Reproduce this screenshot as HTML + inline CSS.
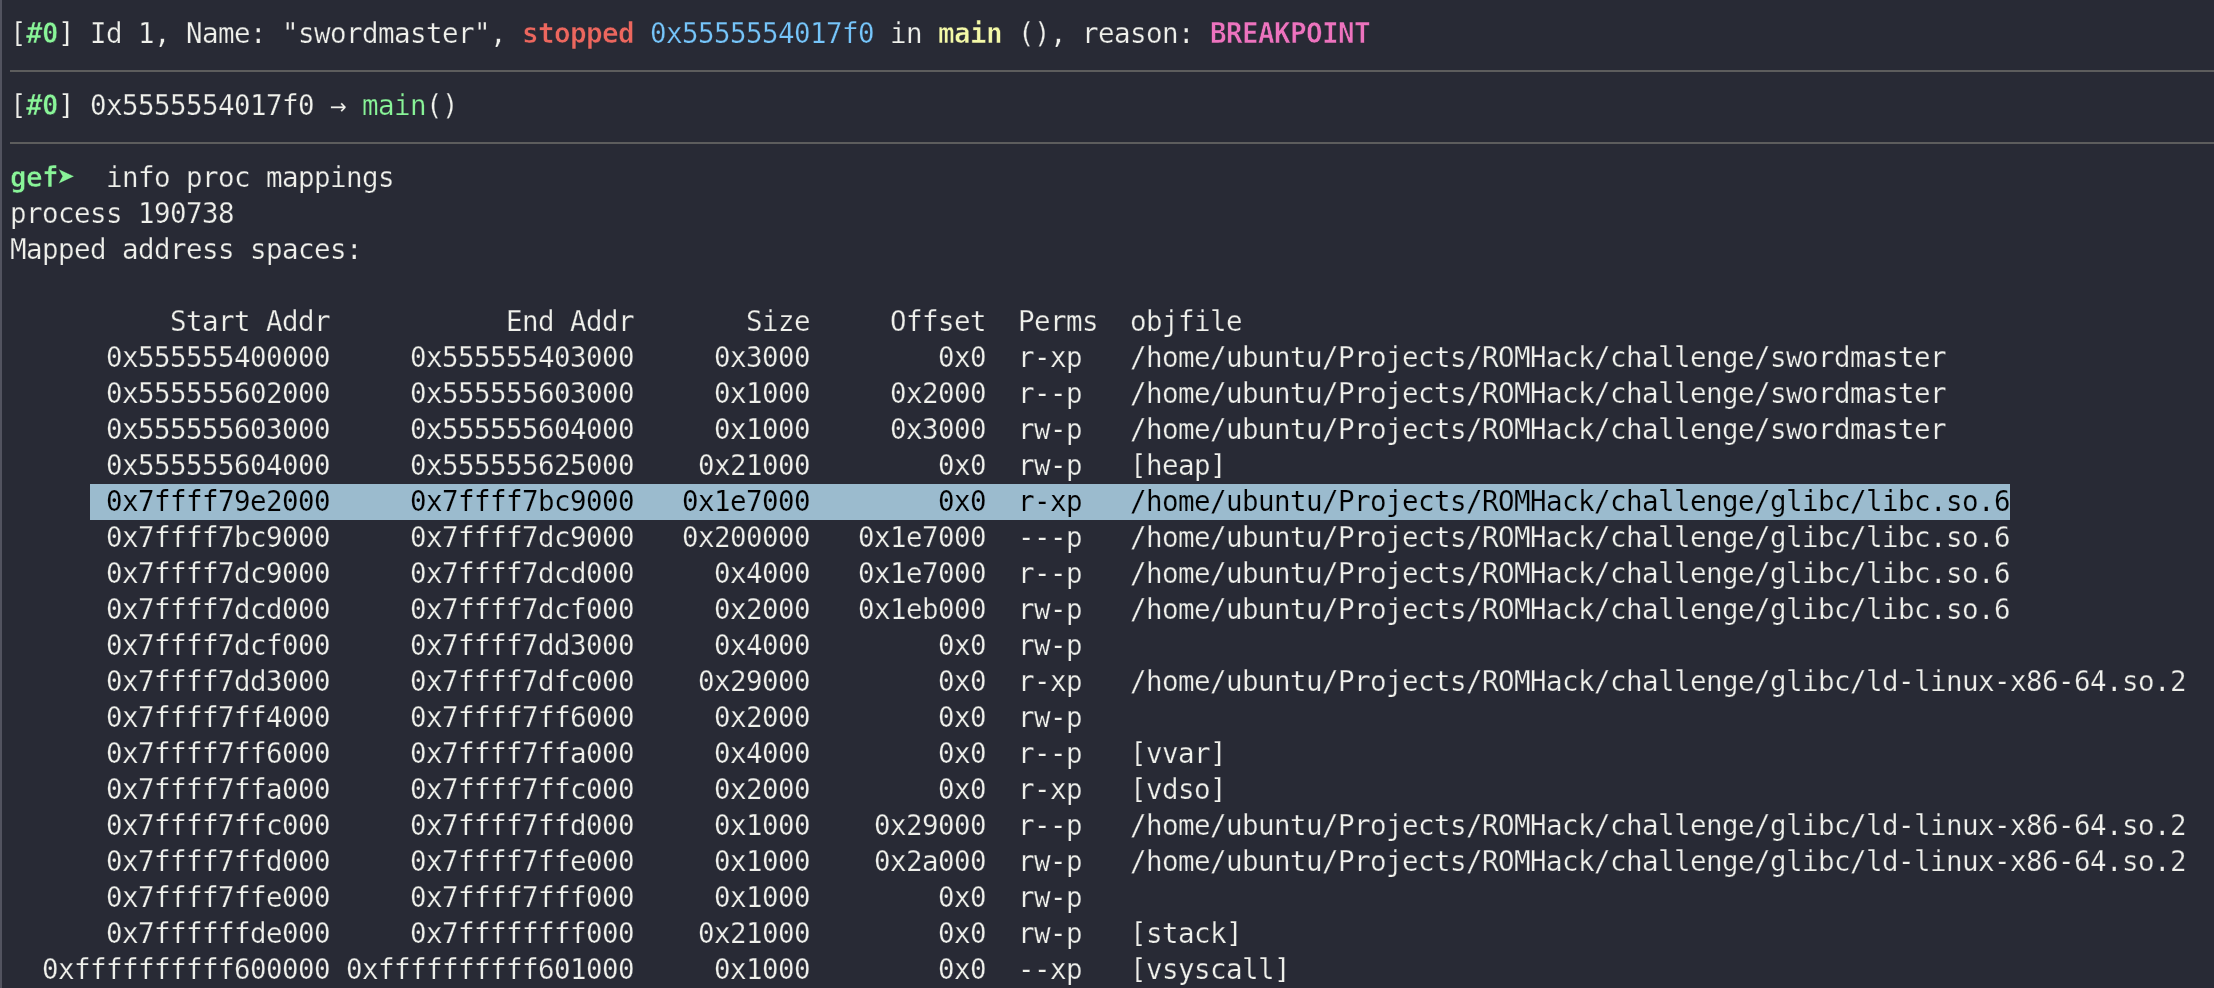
<!DOCTYPE html>
<html><head><meta charset="utf-8"><title>gef - info proc mappings</title>
<style>
html,body{margin:0;padding:0;background:#282a35;}
body{width:2214px;height:988px;overflow:hidden;position:relative;}
#edge{position:absolute;left:0;top:0;width:2px;height:988px;background:#52535f;}
.hr{position:absolute;left:10px;right:0;height:2px;background:#5d5d5d;}
#hl{position:absolute;left:90px;top:484px;width:1920px;height:36px;background:#9bbbce;}
#t{position:absolute;left:10px;top:15px;margin:0;font-family:"DejaVu Sans Mono","Liberation Mono",monospace;font-size:27.5px;letter-spacing:-0.5564px;line-height:36px;color:#eff0eb;white-space:pre;will-change:transform;-webkit-text-stroke:0.25px #282a35;font-kerning:none;font-variant-ligatures:none;}
#t div{height:36px;}
b{font-weight:bold;}
.g{color:#89f498;} .r{color:#ec675e;} .bl{color:#76c5fa;} .y{color:#f4f9a8;} .p{color:#ed73be;}
.sel{color:#000;-webkit-text-stroke:0.15px #9bbbce;}
b{-webkit-text-stroke-width:0.5px;}
.ar{display:inline-block;transform:scale(1.16);transform-origin:50% 60%;}
.s{display:inline-block;white-space:pre;}
.c{letter-spacing:0;text-align:center;-webkit-text-stroke-width:0.15px;}
</style></head>
<body>
<div id="edge"></div>
<div class="hr" style="top:70px"></div>
<div class="hr" style="top:142px"></div>
<div id="hl"></div>
<div id="t"><div><span class="s" style="width:16px">[</span><b class="s g" style="width:32px">#0</b><span class="s" style="width:464px">] Id 1, Name: "swordmaster", </span><b class="s r" style="width:112px">stopped</b><span class="s" style="width:16px"> </span><span class="s bl" style="width:224px">0x5555554017f0</span><span class="s" style="width:64px"> in </span><b class="s y" style="width:64px">main</b><span class="s" style="width:208px"> (), reason: </span><b class="s p" style="width:160px">BREAKPOINT</b></div><div></div><div><span class="s" style="width:16px">[</span><b class="s g" style="width:32px">#0</b><span class="s" style="width:272px">] 0x5555554017f0 </span><span class="s c" style="width:16px">→</span><span class="s" style="width:16px"> </span><span class="s g" style="width:64px">main</span><span class="s" style="width:32px">()</span></div><div></div><div><b class="s g" style="width:48px">gef</b><b class="s g c" style="width:16px"><span class="ar">➤</span></b><span class="s" style="width:320px">  info proc mappings</span></div><div><span class="s" style="width:224px">process 190738</span></div><div><span class="s" style="width:352px">Mapped address spaces:</span></div><div></div><div><span class="s" style="width:336px">          Start Addr </span><span class="s" style="width:304px">          End Addr </span><span class="s" style="width:176px">      Size </span><span class="s" style="width:176px">    Offset </span><span class="s" style="width:128px"> Perms  </span><span class="s" style="width:112px">objfile</span></div><div><span class="s" style="width:336px">      0x555555400000 </span><span class="s" style="width:304px">    0x555555403000 </span><span class="s" style="width:176px">    0x3000 </span><span class="s" style="width:176px">       0x0 </span><span class="s" style="width:128px"> r-xp   </span><span class="s" style="width:816px">/home/ubuntu/Projects/ROMHack/challenge/swordmaster</span></div><div><span class="s" style="width:336px">      0x555555602000 </span><span class="s" style="width:304px">    0x555555603000 </span><span class="s" style="width:176px">    0x1000 </span><span class="s" style="width:176px">    0x2000 </span><span class="s" style="width:128px"> r--p   </span><span class="s" style="width:816px">/home/ubuntu/Projects/ROMHack/challenge/swordmaster</span></div><div><span class="s" style="width:336px">      0x555555603000 </span><span class="s" style="width:304px">    0x555555604000 </span><span class="s" style="width:176px">    0x1000 </span><span class="s" style="width:176px">    0x3000 </span><span class="s" style="width:128px"> rw-p   </span><span class="s" style="width:816px">/home/ubuntu/Projects/ROMHack/challenge/swordmaster</span></div><div><span class="s" style="width:336px">      0x555555604000 </span><span class="s" style="width:304px">    0x555555625000 </span><span class="s" style="width:176px">   0x21000 </span><span class="s" style="width:176px">       0x0 </span><span class="s" style="width:128px"> rw-p   </span><span class="s" style="width:96px">[heap]</span></div><div><span class="sel"><span class="s" style="width:336px">      0x7ffff79e2000 </span><span class="s" style="width:304px">    0x7ffff7bc9000 </span><span class="s" style="width:176px">  0x1e7000 </span><span class="s" style="width:176px">       0x0 </span><span class="s" style="width:128px"> r-xp   </span><span class="s" style="width:880px">/home/ubuntu/Projects/ROMHack/challenge/glibc/libc.so.6</span></span></div><div><span class="s" style="width:336px">      0x7ffff7bc9000 </span><span class="s" style="width:304px">    0x7ffff7dc9000 </span><span class="s" style="width:176px">  0x200000 </span><span class="s" style="width:176px">  0x1e7000 </span><span class="s" style="width:128px"> ---p   </span><span class="s" style="width:880px">/home/ubuntu/Projects/ROMHack/challenge/glibc/libc.so.6</span></div><div><span class="s" style="width:336px">      0x7ffff7dc9000 </span><span class="s" style="width:304px">    0x7ffff7dcd000 </span><span class="s" style="width:176px">    0x4000 </span><span class="s" style="width:176px">  0x1e7000 </span><span class="s" style="width:128px"> r--p   </span><span class="s" style="width:880px">/home/ubuntu/Projects/ROMHack/challenge/glibc/libc.so.6</span></div><div><span class="s" style="width:336px">      0x7ffff7dcd000 </span><span class="s" style="width:304px">    0x7ffff7dcf000 </span><span class="s" style="width:176px">    0x2000 </span><span class="s" style="width:176px">  0x1eb000 </span><span class="s" style="width:128px"> rw-p   </span><span class="s" style="width:880px">/home/ubuntu/Projects/ROMHack/challenge/glibc/libc.so.6</span></div><div><span class="s" style="width:336px">      0x7ffff7dcf000 </span><span class="s" style="width:304px">    0x7ffff7dd3000 </span><span class="s" style="width:176px">    0x4000 </span><span class="s" style="width:176px">       0x0 </span><span class="s" style="width:80px"> rw-p</span></div><div><span class="s" style="width:336px">      0x7ffff7dd3000 </span><span class="s" style="width:304px">    0x7ffff7dfc000 </span><span class="s" style="width:176px">   0x29000 </span><span class="s" style="width:176px">       0x0 </span><span class="s" style="width:128px"> r-xp   </span><span class="s" style="width:1056px">/home/ubuntu/Projects/ROMHack/challenge/glibc/ld-linux-x86-64.so.2</span></div><div><span class="s" style="width:336px">      0x7ffff7ff4000 </span><span class="s" style="width:304px">    0x7ffff7ff6000 </span><span class="s" style="width:176px">    0x2000 </span><span class="s" style="width:176px">       0x0 </span><span class="s" style="width:80px"> rw-p</span></div><div><span class="s" style="width:336px">      0x7ffff7ff6000 </span><span class="s" style="width:304px">    0x7ffff7ffa000 </span><span class="s" style="width:176px">    0x4000 </span><span class="s" style="width:176px">       0x0 </span><span class="s" style="width:128px"> r--p   </span><span class="s" style="width:96px">[vvar]</span></div><div><span class="s" style="width:336px">      0x7ffff7ffa000 </span><span class="s" style="width:304px">    0x7ffff7ffc000 </span><span class="s" style="width:176px">    0x2000 </span><span class="s" style="width:176px">       0x0 </span><span class="s" style="width:128px"> r-xp   </span><span class="s" style="width:96px">[vdso]</span></div><div><span class="s" style="width:336px">      0x7ffff7ffc000 </span><span class="s" style="width:304px">    0x7ffff7ffd000 </span><span class="s" style="width:176px">    0x1000 </span><span class="s" style="width:176px">   0x29000 </span><span class="s" style="width:128px"> r--p   </span><span class="s" style="width:1056px">/home/ubuntu/Projects/ROMHack/challenge/glibc/ld-linux-x86-64.so.2</span></div><div><span class="s" style="width:336px">      0x7ffff7ffd000 </span><span class="s" style="width:304px">    0x7ffff7ffe000 </span><span class="s" style="width:176px">    0x1000 </span><span class="s" style="width:176px">   0x2a000 </span><span class="s" style="width:128px"> rw-p   </span><span class="s" style="width:1056px">/home/ubuntu/Projects/ROMHack/challenge/glibc/ld-linux-x86-64.so.2</span></div><div><span class="s" style="width:336px">      0x7ffff7ffe000 </span><span class="s" style="width:304px">    0x7ffff7fff000 </span><span class="s" style="width:176px">    0x1000 </span><span class="s" style="width:176px">       0x0 </span><span class="s" style="width:80px"> rw-p</span></div><div><span class="s" style="width:336px">      0x7ffffffde000 </span><span class="s" style="width:304px">    0x7ffffffff000 </span><span class="s" style="width:176px">   0x21000 </span><span class="s" style="width:176px">       0x0 </span><span class="s" style="width:128px"> rw-p   </span><span class="s" style="width:112px">[stack]</span></div><div><span class="s" style="width:336px">  0xffffffffff600000 </span><span class="s" style="width:304px">0xffffffffff601000 </span><span class="s" style="width:176px">    0x1000 </span><span class="s" style="width:176px">       0x0 </span><span class="s" style="width:128px"> --xp   </span><span class="s" style="width:160px">[vsyscall]</span></div></div>
</body></html>
